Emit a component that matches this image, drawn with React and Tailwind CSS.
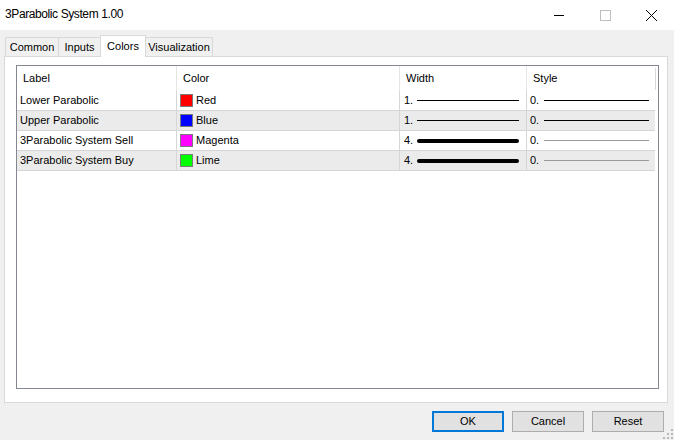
import React from 'react';

const rows = [
  { label: 'Lower Parabolic', color: '#ff0000', name: 'Red', width: '1.', thick: false, styleThin: false },
  { label: 'Upper Parabolic', color: '#0000ff', name: 'Blue', width: '1.', thick: false, styleThin: false },
  { label: '3Parabolic System Sell', color: '#ff00ff', name: 'Magenta', width: '4.', thick: true, styleThin: true },
  { label: '3Parabolic System Buy', color: '#00ff00', name: 'Lime', width: '4.', thick: true, styleThin: true },
];

const tabs = [
  { name: 'Common', w: 'w-[54px]' },
  { name: 'Inputs', w: 'w-[43px]' },
  { name: 'Colors', w: 'w-[46px]' },
  { name: 'Visualization', w: 'w-[68px]' },
];

function TitleBar() {
  return (
    <div className="h-[30px] bg-white flex items-center shrink-0">
      <span className="pl-[5px] pb-[2px] text-[12px] tracking-[-0.4px] text-black">3Parabolic System 1.00</span>
      <div className="ml-auto flex items-center h-full">
        <div className="w-[46px] h-full flex items-center justify-center">
          <svg width="10" height="10" viewBox="0 0 10 10">
            <path d="M0 5.5 H10" stroke="#000" strokeWidth="1" />
          </svg>
        </div>
        <div className="w-[46px] h-full flex items-center justify-center">
          <svg width="11" height="11" viewBox="0 0 11 11">
            <rect x="0.5" y="0.5" width="10" height="10" fill="none" stroke="#bdbdbd" strokeWidth="1" />
          </svg>
        </div>
        <div className="w-[46px] h-full flex items-center justify-center">
          <svg width="11" height="11" viewBox="0 0 11 11">
            <path d="M0 0 L11 11 M11 0 L0 11" stroke="#000" strokeWidth="1" />
          </svg>
        </div>
      </div>
    </div>
  );
}

function Tabs() {
  return (
    <div className="flex items-end h-[21px] pl-[1px]">
      {tabs.map((t) =>
        t.name === 'Colors' ? (
          <div
            key={t.name}
            className={`${t.w} h-[22px] -mb-px -ml-px bg-white border border-b-0 border-[#d9d9d9] relative z-10 flex justify-center pt-[2px] text-[11px] text-black`}
          >
            {t.name}
          </div>
        ) : (
          <div
            key={t.name}
            className={`${t.w} h-[19px] bg-[#f0f0f0] border border-b-0 border-[#d9d9d9] -ml-px first:ml-0 flex items-center justify-center text-[11px] text-black`}
          >
            {t.name}
          </div>
        )
      )}
    </div>
  );
}

function Row({ r, i }) {
  const bg = i % 2 === 1 ? 'bg-[#ebebeb]' : 'bg-white';
  return (
    <div className={`flex h-[20px] border-b border-[#d6d6d6] ${bg}`}>
      <div className="w-[160px] border-r border-[#d6d6d6] pl-[3px] flex items-center truncate">{r.label}</div>
      <div className="w-[223px] border-r border-[#d6d6d6] pl-[3px] flex items-center gap-[3px]">
        <span className="w-[13px] h-[13px] border border-[#7a7a7a]" style={{ backgroundColor: r.color }} />
        <span>{r.name}</span>
      </div>
      <div className="w-[127px] border-r border-[#d6d6d6] pl-[4px] flex items-center gap-[4px]">
        <span className="w-[9px]">{r.width}</span>
        <span className={`w-[102px] bg-black ${r.thick ? 'h-[4px] rounded-[2px]' : 'h-px'}`} />
      </div>
      <div className="flex-1 pl-[3px] flex items-center gap-[4px]">
        <span className="w-[10px]">0.</span>
        <span className={`w-[105px] h-px ${r.styleThin ? 'bg-[#9a9a9a]' : 'bg-black'}`} />
      </div>
    </div>
  );
}

function Table() {
  return (
    <div className="h-[324px] border border-[#828790] bg-white flex text-[11px] text-black">
      <div className="flex-1 flex flex-col">
        <div className="flex h-[25px]">
          <div className="w-[160px] border-r border-[#e5e5e5] pl-[6px] flex items-center">Label</div>
          <div className="w-[223px] border-r border-[#e5e5e5] pl-[6px] flex items-center">Color</div>
          <div className="w-[127px] border-r border-[#e5e5e5] pl-[6px] flex items-center">Width</div>
          <div className="flex-1 pl-[6px] flex items-center">Style</div>
        </div>
        {rows.map((r, i) => (
          <Row key={r.label} r={r} i={i} />
        ))}
      </div>
      <div className="w-[3px] flex justify-start pt-[2px]">
        <div className="w-px h-[22px] bg-[#d9d9d9]" />
      </div>
    </div>
  );
}

function SizeGrip() {
  const dots = [
    [8, 0],
    [8, 4], [4, 4],
    [8, 8], [4, 8], [0, 8],
  ];
  return (
    <svg width="10" height="10" viewBox="0 0 10 10" className="absolute right-[1px] bottom-[1px]">
      {dots.map(([x, y], k) => (
        <rect key={k} x={x} y={y} width="2" height="2" fill="#b9b9b9" />
      ))}
    </svg>
  );
}

export default function App() {
  return (
    <div
      className="w-[674px] h-[440px] bg-[#f0f0f0] flex flex-col relative overflow-hidden"
      style={{ fontFamily: '"Liberation Sans", Arial, sans-serif' }}
    >
      <TitleBar />
      <div className="pt-[5px] px-[4px] flex flex-col">
        <Tabs />
        <div className="w-[664px] h-[347px] bg-white border border-[#d9d9d9] pt-[8px] pl-[11px] pr-[8px]">
          <Table />
        </div>
        <div className="flex justify-end gap-[8px] mt-[8px] pr-[6px]">
          <button className="w-[72px] h-[21px] bg-[#e1e1e1] border-2 border-[#0078d7] text-[11px] text-black flex items-center justify-center">
            OK
          </button>
          <button className="w-[72px] h-[21px] bg-[#e1e1e1] border border-[#adadad] text-[11px] text-black flex items-center justify-center">
            Cancel
          </button>
          <button className="w-[72px] h-[21px] bg-[#e1e1e1] border border-[#adadad] text-[11px] text-black flex items-center justify-center">
            Reset
          </button>
        </div>
      </div>
      <SizeGrip />
    </div>
  );
}
